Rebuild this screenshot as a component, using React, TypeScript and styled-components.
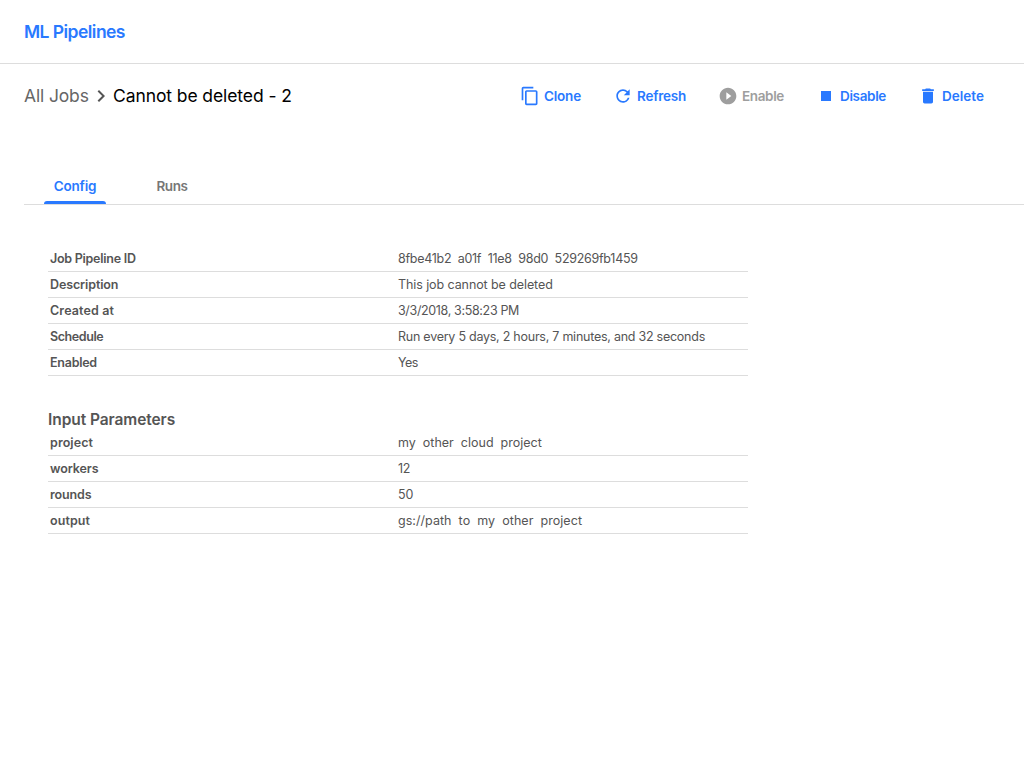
import React from 'react';
import styled, { createGlobalStyle } from 'styled-components';
import {
  MdChevronRight,
  MdContentCopy,
  MdDelete,
  MdPlayCircleFilled,
  MdRefresh,
  MdStop,
} from 'react-icons/md';
import type { IconType } from 'react-icons';

const color = {
  primary: '#2979ff',
  text: '#555',
  muted: '#777',
  disabled: '#9e9e9e',
  line: '#ddd',
};

const GlobalStyle = createGlobalStyle`
  *, *::before, *::after { box-sizing: border-box; }
  body {
    margin: 0;
    background: #fff;
    color: ${color.text};
    font-family: Inter, 'Liberation Sans', sans-serif;
  }
`;

const Text = styled.span<{ $track?: number }>`
  letter-spacing: ${(p) => p.$track ?? 0}px;
  white-space: pre;
`;

const Page = styled.div`
  display: flex;
  flex-direction: column;
  min-height: 100vh;
`;

const Header = styled.header`
  display: flex;
  align-items: center;
  height: 64px;
  padding-left: 24px;
  border-bottom: 1px solid ${color.line};
  color: ${color.primary};
  font-size: 17.5px;
  font-weight: 600;
`;

const Toolbar = styled.div`
  display: flex;
  align-items: center;
  justify-content: space-between;
  height: 64px;
  padding: 0 40px 0 24px;
`;

const Breadcrumbs = styled.nav`
  display: flex;
  align-items: center;
  font-size: 17.5px;
  line-height: 24px;
`;

const Crumb = styled.a`
  width: 65px;
  color: #666;
`;

const CurrentPage = styled.span`
  color: #000;
`;

const Actions = styled.div`
  display: flex;
  gap: 32px;
`;

const ActionButton = styled.button<{ $width: number }>`
  display: flex;
  align-items: center;
  gap: 4px;
  width: ${(p) => p.$width}px;
  padding: 0;
  border: 0;
  background: none;
  color: ${color.primary};
  font: 600 13.5px/20px Inter, 'Liberation Sans', sans-serif;

  &:disabled {
    color: ${color.disabled};
  }

  svg {
    flex: none;
  }
`;

const Tabs = styled.div`
  display: flex;
  height: 37px;
  margin: 40px 0 0 24px;
  padding-left: 20px;
  border-bottom: 1px solid ${color.line};
`;

const Tab = styled.div<{ $active?: boolean }>`
  display: flex;
  flex-direction: column;
  align-items: center;
  justify-content: space-between;
  width: 62px;
  margin-right: 35px;
  padding-top: 9px;
  color: ${(p) => (p.$active ? color.primary : color.muted)};
  font-size: 13.5px;
  font-weight: 600;
  line-height: 18px;
`;

const Indicator = styled.div`
  width: 62px;
  height: 3px;
  border-radius: 3px 3px 0 0;
  background: ${color.primary};
`;

const Content = styled.main`
  width: 748px;
  padding: 41px 0 0 48px;
`;

const SectionTitle = styled.h2`
  margin: 34px 0 0;
  height: 20px;
  font-size: 15.5px;
  font-weight: 600;
  line-height: 20px;
`;

const Row = styled.div`
  display: grid;
  grid-template-columns: 348px 1fr;
  height: 26px;
  padding: 0 2px;
  border-bottom: 1px solid ${color.line};
  font-size: 12.5px;
  line-height: 25px;
`;

const Name = styled.div`
  font-weight: 600;
`;

const Value = styled.div``;

type Action = {
  label: string;
  icon: IconType;
  width: number;
  track: number;
  disabled?: boolean;
};

const actions: Action[] = [
  { label: 'Clone', icon: MdContentCopy, width: 61, track: -0.2 },
  { label: 'Refresh', icon: MdRefresh, width: 73, track: -0.24 },
  { label: 'Enable', icon: MdPlayCircleFilled, width: 66, track: -0.36, disabled: true },
  { label: 'Disable', icon: MdStop, width: 70, track: -0.34 },
  { label: 'Delete', icon: MdDelete, width: 66, track: 0 },
];

type Field = { name: string; nameTrack: number; value: string; valueTrack: number };

const details: Field[] = [
  { name: 'Job Pipeline ID', nameTrack: -0.26, value: '8fbe41b2  a01f  11e8  98d0  529269fb1459', valueTrack: -0.28 },
  { name: 'Description', nameTrack: -0.12, value: 'This job cannot be deleted', valueTrack: -0.09 },
  { name: 'Created at', nameTrack: 0.13, value: '3/3/2018, 3:58:23 PM', valueTrack: -0.35 },
  { name: 'Schedule', nameTrack: -0.42, value: 'Run every 5 days, 2 hours, 7 minutes, and 32 seconds', valueTrack: -0.25 },
  { name: 'Enabled', nameTrack: -0.25, value: 'Yes', valueTrack: -0.5 },
];

const parameters: Field[] = [
  { name: 'project', nameTrack: 0.08, value: 'my  other  cloud  project', valueTrack: 0 },
  { name: 'workers', nameTrack: -0.1, value: '12', valueTrack: -0.4 },
  { name: 'rounds', nameTrack: -0.12, value: '50', valueTrack: -0.2 },
  { name: 'output', nameTrack: 0.08, value: 'gs://path  to  my  other  project', valueTrack: 0.04 },
];

function Fields({ items }: { items: Field[] }) {
  return (
    <div>
      {items.map((f) => (
        <Row key={f.name}>
          <Name>
            <Text $track={f.nameTrack}>{f.name}</Text>
          </Name>
          <Value>
            <Text $track={f.valueTrack}>{f.value}</Text>
          </Value>
        </Row>
      ))}
    </div>
  );
}

export default function App() {
  return (
    <Page>
      <GlobalStyle />
      <Header>
        <Text $track={-0.54}>ML Pipelines</Text>
      </Header>
      <Toolbar>
        <Breadcrumbs>
          <Crumb>
            <Text $track={-0.14}>All Jobs</Text>
          </Crumb>
          <MdChevronRight size={24} color="#555" />
          <CurrentPage>
            <Text $track={-0.09}>Cannot be deleted - 2</Text>
          </CurrentPage>
        </Breadcrumbs>
        <Actions>
          {actions.map(({ label, icon: Icon, width, track, disabled }) => (
            <ActionButton key={label} $width={width} disabled={disabled}>
              <Icon size={20} />
              <Text $track={track}>{label}</Text>
            </ActionButton>
          ))}
        </Actions>
      </Toolbar>
      <Tabs>
        <Tab $active>
          <Text $track={-0.2}>Config</Text>
          <Indicator />
        </Tab>
        <Tab>
          <Text $track={-0.45}>Runs</Text>
        </Tab>
      </Tabs>
      <Content>
        <Fields items={details} />
        <SectionTitle>
          <Text $track={-0.07}>Input Parameters</Text>
        </SectionTitle>
        <Fields items={parameters} />
      </Content>
    </Page>
  );
}
